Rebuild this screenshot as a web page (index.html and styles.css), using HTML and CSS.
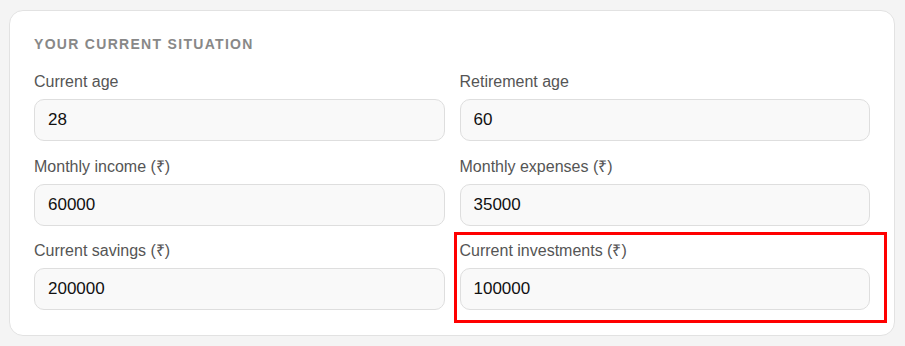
FILE: index.html
```html
<!DOCTYPE html>
<html lang="en">
<head>
    <meta charset="UTF-8">
    <meta name="viewport" content="width=device-width, initial-scale=1.0">
    <title>Retirement Planner - Your Current Situation</title>
    <link rel="stylesheet" href="styles.css">
</head>
<body>

<div class="card">
    <h3 class="section-title">Your Current Situation</h3>
    <div class="fields">
        <div class="field">
            <label for="age">Current age</label>
            <input type="number" id="age" value="28">
        </div>
        <div class="field">
            <label for="retireAge">Retirement age</label>
            <input type="number" id="retireAge" value="60">
        </div>
        <div class="field">
            <label for="income">Monthly income (₹)</label>
            <input type="number" id="income" value="60000">
        </div>
        <div class="field">
            <label for="expenses">Monthly expenses (₹)</label>
            <input type="number" id="expenses" value="35000">
        </div>
        <div class="field">
            <label for="savings">Current savings (₹)</label>
            <input type="number" id="savings" value="200000">
        </div>
        <div class="field highlighted">
            <label for="investments">Current investments (₹)</label>
            <input type="number" id="investments" value="100000">
        </div>
    </div>
</div>

</body>
</html>
```

FILE: styles.css
```css
body {
    font-family: "Liberation Sans", Arial, sans-serif;
    background-color: #f4f4f4;
    margin: 0;
    padding: 10px 10px 10px 9px;
}
.card {
    background: white;
    border: 1px solid #e2e2e2;
    border-radius: 14px;
    padding: 24px 24px 25px 24px;
}
.section-title {
    margin: 0 0 20px 0;
    font-size: 14px;
    font-weight: bold;
    letter-spacing: 1.3px;
    text-transform: uppercase;
    color: #888;
    line-height: 18px;
}
.fields {
    display: grid;
    grid-template-columns: 1fr 1fr;
    column-gap: 15px;
    row-gap: 16.5px;
}
.field {
    position: relative;
}
.field label {
    display: block;
    font-size: 16px;
    line-height: 18px;
    color: #555;
    margin-bottom: 8px;
}
.field input {
    display: block;
    width: 100%;
    box-sizing: border-box;
    height: 42px;
    padding: 0 13px;
    font-family: "Liberation Sans", Arial, sans-serif;
    font-size: 17px;
    color: #111;
    background: #f9f9f9;
    border: 1px solid #dedede;
    border-radius: 10px;
    outline: none;
    -moz-appearance: textfield;
}
.field input::-webkit-outer-spin-button,
.field input::-webkit-inner-spin-button {
    -webkit-appearance: none;
    margin: 0;
}
.highlighted::after {
    content: "";
    position: absolute;
    top: -10px;
    left: -6px;
    right: -17px;
    bottom: -13px;
    border: 3px solid #ff0000;
    pointer-events: none;
}
```
